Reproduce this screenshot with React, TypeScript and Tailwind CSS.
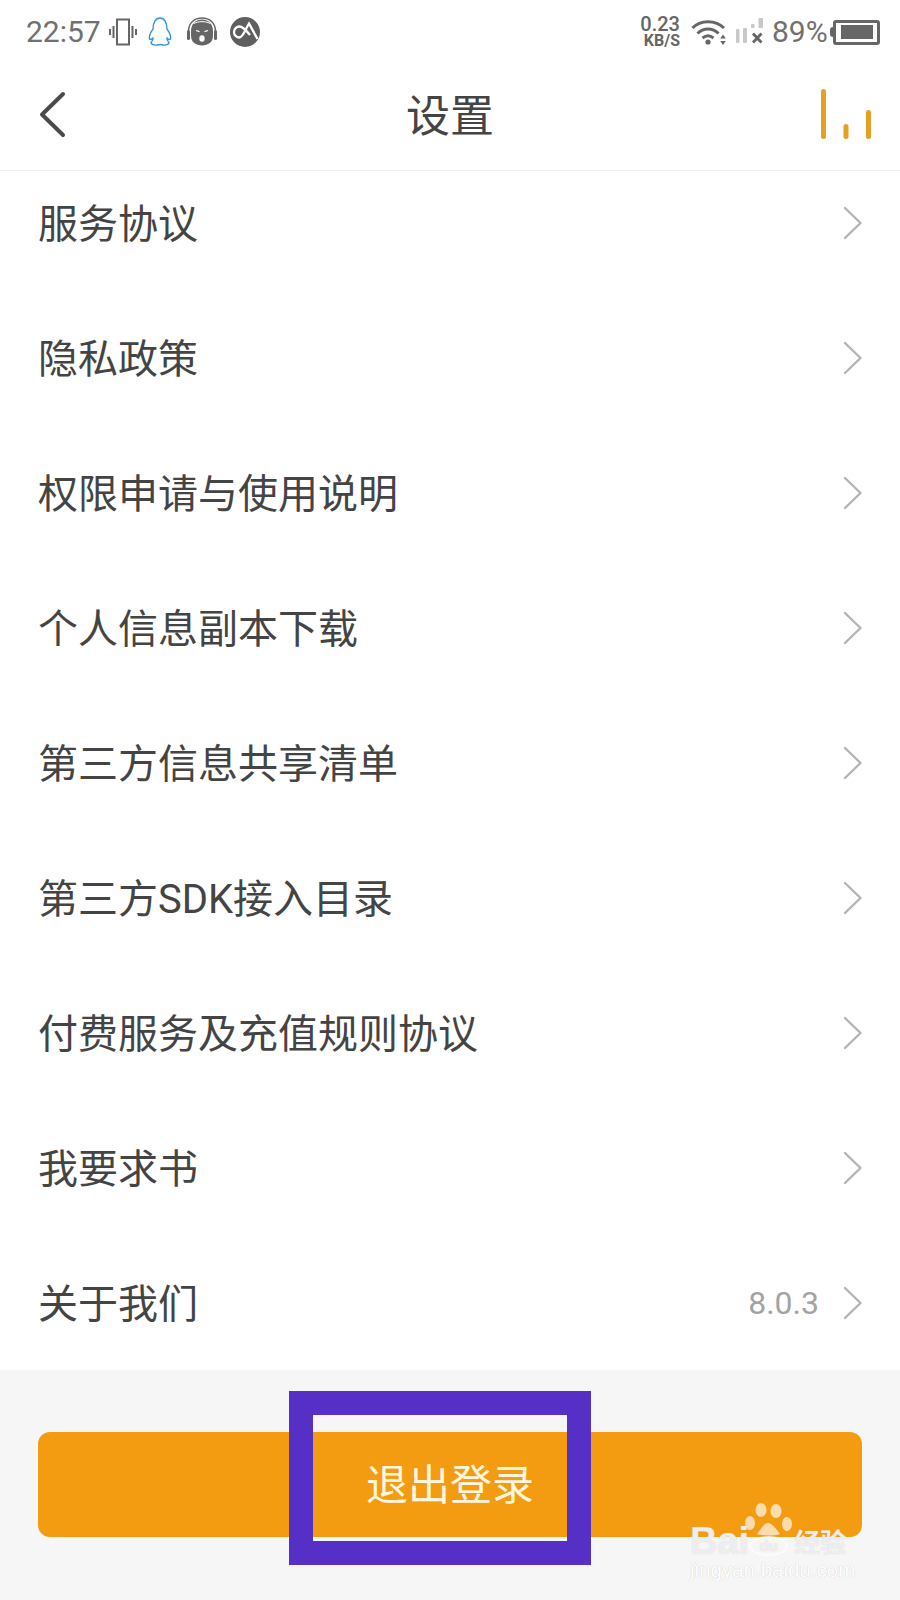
const rows: { label: string; value?: string }[] = [
  { label: "服务协议" },
  { label: "隐私政策" },
  { label: "权限申请与使用说明" },
  { label: "个人信息副本下载" },
  { label: "第三方信息共享清单" },
  { label: "第三方SDK接入目录" },
  { label: "付费服务及充值规则协议" },
  { label: "我要求书" },
  { label: "关于我们", value: "8.0.3" },
];

function Chevron() {
  return (
    <svg width="20" height="34" viewBox="0 0 20 34" fill="none" className="shrink-0">
      <path d="M2 2 L17.500 17 L2 32" stroke="#b4b4b4" strokeWidth="2.400" strokeLinecap="round" strokeLinejoin="round" />
    </svg>
  );
}

function StatusLeft() {
  return (
    <div className="flex items-center">
      <span className="text-[30px] leading-none text-[#707070] ml-[26px] w-[83px]">22:57</span>
      <svg width="28" height="28" viewBox="0 0 28 28" fill="none" stroke="#666">
        <rect x="8" y="1.500" width="12" height="25" strokeWidth="2" />
        <path d="M4.500 8v12M1 11v6M23.500 8v12M27 11v6" strokeWidth="2" />
      </svg>
      <svg width="26" height="30" viewBox="0 0 26 30" className="ml-[10px]" fill="none" stroke="#2f93dd" strokeWidth="1.400">
        <path d="M6 12C6 5 9 1 13 1s7 4 7 11c2 3 4.500 6.500 3.500 10-1 1-2.500 0-3.500-1-.5 2 .5 3 2 4.500 0 2-3 3-6 2.500-1-.5-4-.5-6 0-3 .5-6-.5-6-2.500 1.500-1.500 2.500-2.500 2-4.500-1 1-2.500 2-3.500 1C1.500 18.500 4 15 6 12Z" />
      </svg>
      <svg width="32" height="30" viewBox="0 0 32 30" className="ml-[13px]">
        <path d="M5 14C5 7 10 2.500 16 2.500S27 7 27 14v5c0 6-5 9.500-11 9.500S5 25 5 19Z" fill="#666" />
        <path d="M2.500 20v-6C2.500 6 8.500 1 16 1s13.500 5 13.500 13v6" fill="none" stroke="#666" strokeWidth="1.500" />
        <rect x="1" y="13" width="3" height="10" rx="1.500" fill="#666" />
        <rect x="28" y="13" width="3" height="10" rx="1.500" fill="#666" />
        <path d="M8 6.500C12 4 20 4 24 6.500" fill="none" stroke="#fff" strokeWidth="1" />
        <path d="M10 13.500l3.500 1.200M22 13.500l-3.500 1.200" stroke="#fff" strokeWidth="1.300" />
        <ellipse cx="16" cy="21.500" rx="2.700" ry="3.200" fill="#fff" />
      </svg>
      <svg width="30" height="30" viewBox="0 0 30 30" className="ml-[12px]">
        <circle cx="15" cy="15" r="15" fill="#5f5f5f" />
        <path d="M27.500 22 19 6.500C15 13 13 20.500 9.500 20.500a5.500 5.500 0 0 1 0-11C13 9.500 16 13 20 18" fill="none" stroke="#fff" strokeWidth="2.300" />
      </svg>
    </div>
  );
}

function StatusRight() {
  return (
    <div className="flex items-center">
      <div className="w-[42px] flex flex-col items-end text-[#666] font-medium mr-[11px]">
        <span className="text-[20px] leading-[17px]">0.23</span>
        <span className="text-[16px] leading-[15px] font-bold">KB/S</span>
      </div>
      <svg width="36" height="28" viewBox="0 0 36 28" fill="none" stroke="#666" strokeWidth="3">
        <path d="M1.500 10C9.500 1.500 24.500 1.500 33 10" />
        <path d="M6.500 15.500c6-6 15-6 21 0" />
        <path d="M11.500 20c3.500-2.800 7.500-2.800 11 0" />
        <circle cx="17" cy="24" r="2.600" fill="#666" stroke="none" />
        <path d="M32 16.500l-2.800 4h5.600ZM32 27l-2.800-4h5.600Z" fill="#666" stroke="none" />
      </svg>
      <svg width="28" height="28" viewBox="0 0 28 28" className="ml-[9px]">
        <rect x="0" y="11" width="3.500" height="14" rx="1" fill="#c9c9c9" />
        <rect x="7" y="10" width="4" height="15" rx="1" fill="#c9c9c9" />
        <rect x="15" y="6" width="3.500" height="4" rx="1" fill="#c9c9c9" />
        <rect x="22.500" y="0" width="4.500" height="10" rx="1" fill="#c9c9c9" />
        <path d="M17 15.500l8.500 9M25.500 15.500l-8.500 9" stroke="#666" strokeWidth="2.800" />
      </svg>
      <span className="text-[30px] leading-none text-[#707070] ml-[8px] w-[58px]">89%</span>
      <div className="w-[3px] h-[10px] bg-[#666] rounded-l-sm" />
      <div className="w-[47px] h-[25px] border-[3px] border-[#666] rounded-[3px] flex items-center justify-center">
        <div className="w-[32px] h-[14px] bg-[#666]" />
      </div>
    </div>
  );
}

function Watermark() {
  return (
    <div className="absolute left-[690px] top-[120px] w-[170px] h-[90px] pointer-events-none text-white/70">
      <div
        className="absolute left-0 top-[39px] flex items-center h-[24px] text-[38px] leading-[24px] font-bold [text-shadow:0_0_1px_#c8c8c8]"
        style={{ fontFamily: '"Liberation Sans", sans-serif' }}
      >
        <span>Bai</span>
        <span className="w-[39px] h-[20px] mt-[9px] rounded-[50%] border-[2px] border-white/70 text-[15px] leading-[16px] flex items-center justify-center">du</span>
        <span className="ml-[6px] text-[26px]" style={{ fontFamily: '"Noto Sans CJK SC", sans-serif' }}>经验</span>
      </div>
      <svg width="50" height="38" viewBox="0 0 50 38" fill="#ffffff" fillOpacity="0.65" className="absolute left-[54px] top-[13px]">
        <ellipse cx="6" cy="20" rx="5" ry="7" />
        <ellipse cx="17" cy="7" rx="5.500" ry="7" />
        <ellipse cx="32" cy="8" rx="5.500" ry="7" />
        <ellipse cx="43" cy="21" rx="5" ry="7" />
        <path d="M24 20c-4 0-8 7-11 11 6 2 17 2 23 0-3-4-8-11-12-11Z" />
      </svg>
      <span
        className="absolute left-0 top-[68px] text-[20.500px] leading-[24px] text-white whitespace-nowrap [text-shadow:0_0_1px_#bdbdbd]"
        style={{ fontFamily: '"Liberation Sans", sans-serif' }}
      >
        jingyan.baidu.com
      </span>
    </div>
  );
}

export default function App() {
  return (
    <div
      className="relative w-[900px] h-[1600px] overflow-hidden bg-white flex flex-col text-[#444]"
      style={{ fontFamily: '"Roboto", "Noto Sans CJK SC", sans-serif' }}
    >
      <div className="h-[64px] flex items-center justify-between pr-[20px]">
        <StatusLeft />
        <StatusRight />
      </div>
      <header className="relative h-[107px] border-b border-[#ececec] flex items-center justify-center shrink-0">
        <svg width="30" height="48" viewBox="0 0 30 48" fill="none" className="absolute left-[38px] top-[27px]">
          <path d="M25 3 L4 23.500 L25 44" stroke="#4a4a4a" strokeWidth="4" strokeLinecap="round" strokeLinejoin="round" />
        </svg>
        <h1 className="text-[44px] leading-none font-normal text-[#444]">设置</h1>
        <svg width="52" height="52" viewBox="0 0 52 52" className="absolute right-[28px] top-[24px]">
          <rect x="1" y="1" width="5" height="50" rx="2.500" fill="#e6a023" />
          <rect x="23.500" y="36" width="5" height="15" rx="2.500" fill="#e6a023" />
          <rect x="46" y="22" width="5" height="29" rx="2.500" fill="#e6a023" />
        </svg>
      </header>
      <div className="h-[1199px] overflow-hidden shrink-0">
        <div className="-mt-[16px]">
          {rows.map((r) => (
            <div key={r.label} className="h-[135px] flex items-center pl-[38px] pr-[37px]">
              <span className="text-[40px] leading-none text-[#444] flex-1 pt-[4px]">{r.label}</span>
              {r.value && <span className="text-[32px] leading-none text-[#a3a3a3] mr-[24px]">{r.value}</span>}
              <Chevron />
            </div>
          ))}
        </div>
      </div>
      <div className="relative flex-1 bg-[#f6f6f6] px-[38px] pt-[62px]">
        <button className="w-full h-[105px] bg-[#f39c12] rounded-[12px] text-[42px] leading-none text-[#fff6e0] flex items-center justify-center pt-[3px]">
          退出登录
        </button>
        <div className="absolute left-[289px] top-[21px] w-[302px] h-[174px] border-[24px] border-[#562fc7] flex flex-col justify-between">
          <div className="h-[17px] bg-[#f6f6f6]" />
          <div className="h-[4px] bg-[#f6f6f6]" />
        </div>
        <Watermark />
      </div>
    </div>
  );
}
